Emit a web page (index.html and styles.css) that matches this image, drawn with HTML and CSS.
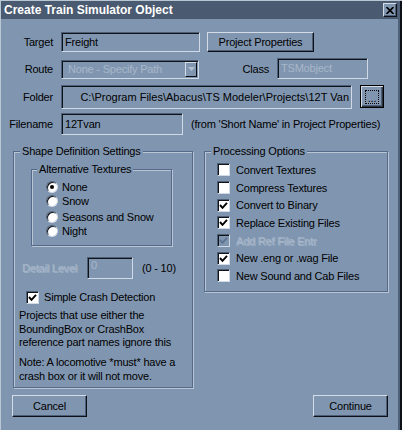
FILE: index.html
```html
<!DOCTYPE html>
<html lang="en">
<head>
  <meta charset="UTF-8">
  <meta name="viewport" content="width=device-width, initial-scale=1.0">
  <title>Create Train Simulator Object</title>
  <link rel="stylesheet" href="styles.css">
</head>
<body>
  <div class="window">
    <div class="titlebar">
      <span class="title">Create Train Simulator Object</span>
      <span class="close">
        <svg width="8" height="7" viewBox="0 0 8 7"><path d="M0.5 0 L7.5 7 M7.5 0 L0.5 7" stroke="#000" stroke-width="1.7"/></svg>
      </span>
    </div>

    <div class="row row-target">
      <span class="lbl">Target</span>
      <div class="field field-target">Freight</div>
      <span class="btn btn-props">Project Properties</span>
    </div>

    <div class="row row-route">
      <span class="lbl">Route</span>
      <div class="field select">
        <span class="select-text dim">None - Specify Path</span>
        <span class="arrow">
          <svg width="7" height="4" viewBox="0 0 7 4"><path d="M0 0 H7 L3.5 4 Z" fill="#b4c1d0"/></svg>
        </span>
      </div>
      <span class="lbl lbl-class">Class</span>
      <div class="field field-class dim">TSMobject</div>
    </div>

    <div class="row row-folder">
      <span class="lbl">Folder</span>
      <div class="field field-folder">C:\Program Files\Abacus\TS Modeler\Projects\12T Van</div>
      <span class="btn btn-browse"><span class="focus">...</span></span>
    </div>

    <div class="row row-file">
      <span class="lbl">Filename</span>
      <div class="field field-file">12Tvan</div>
      <span class="hint">(from 'Short Name' in Project Properties)</span>
    </div>

    <div class="groups">
      <div class="group group-shape">
        <span class="group-title">Shape Definition Settings</span>

        <div class="group subgroup">
          <span class="group-title">Alternative Textures</span>
          <div class="radio-row first"><span class="radio on"></span>None</div>
          <div class="radio-row"><span class="radio"></span>Snow</div>
          <div class="radio-row sep"><span class="radio"></span>Seasons and Snow</div>
          <div class="radio-row"><span class="radio"></span>Night</div>
        </div>

        <div class="detail-row">
          <span class="detail-lbl dim">Detail Level</span>
          <div class="field field-detail dim">0</div>
          <span class="range">(0 - 10)</span>
        </div>

        <div class="crash-row">
          <span class="cb"><svg width="9" height="9" viewBox="0 0 9 9"><path d="M1 4 L3.5 6.8 L8 1.8" fill="none" stroke="#000" stroke-width="1.9"/></svg></span>
          Simple Crash Detection
        </div>

        <div class="note">
          <p>Projects that use either the<br>BoundingBox or CrashBox<br>reference part names ignore this</p>
          <p class="note-loco">Note: A locomotive *must* have a<br>crash box or it will not move.</p>
        </div>
      </div>

      <div class="group group-proc">
        <span class="group-title">Processing Options</span>
        <div class="proc-list">
          <div class="check-row"><span class="cb"></span>Convert Textures</div>
          <div class="check-row"><span class="cb"></span>Compress Textures</div>
          <div class="check-row"><span class="cb"><svg width="9" height="9" viewBox="0 0 9 9"><path d="M1 4 L3.5 6.8 L8 1.8" fill="none" stroke="#000" stroke-width="1.9"/></svg></span>Convert to Binary</div>
          <div class="check-row"><span class="cb"><svg width="9" height="9" viewBox="0 0 9 9"><path d="M1 4 L3.5 6.8 L8 1.8" fill="none" stroke="#000" stroke-width="1.9"/></svg></span>Replace Existing Files</div>
          <div class="check-row dim"><span class="cb cb-off"><svg width="9" height="9" viewBox="0 0 9 9"><path d="M1 4 L3.5 6.8 L8 1.8" fill="none" stroke="#5f7390" stroke-width="1.9"/></svg></span>Add Ref File Entr</div>
          <div class="check-row"><span class="cb"><svg width="9" height="9" viewBox="0 0 9 9"><path d="M1 4 L3.5 6.8 L8 1.8" fill="none" stroke="#000" stroke-width="1.9"/></svg></span>New .eng or .wag File</div>
          <div class="check-row"><span class="cb"></span>New Sound and Cab Files</div>
        </div>
      </div>
    </div>

    <div class="footer">
      <span class="btn btn-foot">Cancel</span>
      <span class="btn btn-foot">Continue</span>
    </div>
  </div>
</body>
</html>
```

FILE: styles.css
```css
* {
  box-sizing: border-box;
}
body {
  margin: 0;
  background-color: #8096b0;
  font-family: "Liberation Sans", Arial, sans-serif;
  font-size: 11px;
  letter-spacing: -0.2px;
  color: #000;
}
.window {
  width: 402px;
  height: 430px;
  overflow: hidden;
  padding-top: 1px;
  background-color: #8096b0;
  box-shadow: inset 1px 1px 0 #b9c6d4, inset -2px 0 0 #0d1117, inset -4px 0 0 #4f6079;
}
.titlebar {
  height: 18px;
  margin: 0 4px 0 1px;
  padding: 0 1px 0 3px;
  background-color: #4a5a70;
  display: flex;
  align-items: center;
  justify-content: space-between;
}
.title {
  color: #fff;
  font-weight: bold;
  font-size: 12px;
  letter-spacing: 0;
}
.close {
  width: 14px;
  height: 14px;
  background-color: #8096b0;
  border: 1px solid;
  border-color: #d3dce7 #0d1117 #0d1117 #d3dce7;
  box-shadow: inset -1px -1px 0 #4d5e75;
  display: flex;
  align-items: center;
  justify-content: center;
}

/* top form rows */
.row {
  display: flex;
  align-items: center;
}
.lbl {
  width: 53px;
  margin-right: 8px;
  text-align: right;
  white-space: nowrap;
}
.field {
  height: 20px;
  padding: 0 3px;
  border: 1px solid;
  border-color: #4d5e75 #d0dae6 #d0dae6 #4d5e75;
  box-shadow: inset 1px 1px 0 #0f141b;
  display: flex;
  align-items: center;
  white-space: nowrap;
  overflow: hidden;
}
.dim {
  color: #a8b7c9;
}
.btn {
  border: 1px solid;
  border-color: #d3dce7 #0d1117 #0d1117 #d3dce7;
  box-shadow: inset -1px -1px 0 #4d5e75;
  display: flex;
  align-items: center;
  justify-content: center;
  white-space: nowrap;
}
.row-target {
  margin-top: 13px;
  height: 20px;
}
.field-target {
  width: 139px;
}
.btn-props {
  width: 107px;
  height: 20px;
  margin-left: 7px;
}
.row-route {
  margin-top: 6px;
  height: 22px;
}
.select {
  width: 138px;
  height: 19px;
  padding: 0 1px 0 6px;
}
.select-text {
  flex: 1;
}
.arrow {
  width: 12px;
  height: 15px;
  border: 1px solid;
  border-color: #d3dce7 #0d1117 #0d1117 #d3dce7;
  display: flex;
  align-items: center;
  justify-content: center;
}
.lbl-class {
  width: 70px;
}
.field-class {
  width: 91px;
  height: 21px;
  margin-top: -2px;
}
.row-folder {
  margin-top: 5px;
  height: 24px;
}
.field-folder {
  width: 291px;
  height: 24px;
  justify-content: flex-end;
  padding-right: 2px;
  letter-spacing: 0;
}
.btn-browse {
  width: 24px;
  height: 23px;
  margin-left: 8px;
  margin-top: -1px;
  border-color: #000;
  box-shadow: inset 1px 1px 0 #d3dce7, inset -1px -1px 0 #2a3442, inset -2px -2px 0 #4d5e75;
}
.focus {
  width: 14px;
  height: 14px;
  border: 1px dotted #000;
  display: flex;
  align-items: flex-end;
  justify-content: center;
  line-height: 9px;
}
.row-file {
  margin-top: 4px;
  height: 22px;
}
.field-file {
  width: 122px;
  height: 22px;
}
.hint {
  margin-left: 8px;
  white-space: nowrap;
}

/* group boxes */
.groups {
  display: flex;
  align-items: flex-start;
  gap: 11px;
  padding-left: 13px;
  margin-top: 16px;
}
.group {
  border: 1px solid #56698a;
  box-shadow: inset 1px 1px 0 #b8c5d4, 1px 1px 0 #b8c5d4;
}
.group-title {
  display: block;
  width: max-content;
  line-height: 14px;
  margin: -8px 0 0 6px;
  padding: 0 2px;
  background-color: #8096b0;
}
.group-shape {
  width: 180px;
  height: 237px;
}
.group-proc {
  width: 184px;
  height: 141px;
}
.subgroup {
  width: 141px;
  height: 77px;
  margin: 11px 0 0 17px;
}
.subgroup .group-title {
  margin-left: 5px;
}
.radio-row {
  display: flex;
  align-items: center;
  height: 14px;
  padding-left: 14px;
}
.radio-row.first {
  margin-top: 4px;
}
.radio-row.sep {
  margin-top: 2px;
}
.radio {
  width: 12px;
  height: 12px;
  margin-right: 4px;
  border-radius: 50%;
  background-color: #fff;
  border: 1px solid;
  border-color: #4d5e75 #d0dae6 #d0dae6 #4d5e75;
  box-shadow: inset 1px 1px 0 #0f141b;
  display: flex;
  align-items: center;
  justify-content: center;
}
.radio.on:after {
  content: "";
  width: 4px;
  height: 4px;
  border-radius: 50%;
  background-color: #000;
}
.detail-row {
  display: flex;
  align-items: center;
  height: 22px;
  margin-top: 11px;
  padding-left: 8px;
}
.detail-lbl {
  width: 57px;
  white-space: nowrap;
  text-shadow: 1px 1px 0 #9fb1c6;
}
.field-detail {
  width: 46px;
  height: 22px;
  margin-left: 8px;
  align-items: flex-start;
  padding-top: 1px;
}
.range {
  margin-left: 9px;
}
.crash-row {
  display: flex;
  align-items: center;
  height: 14px;
  margin-top: 11px;
  padding-left: 12px;
}
.crash-row .cb {
  margin-right: 5px;
}
.cb {
  flex: none;
  width: 13px;
  height: 13px;
  background-color: #fff;
  border: 1px solid;
  border-color: #4d5e75 #d0dae6 #d0dae6 #4d5e75;
  box-shadow: inset 1px 1px 0 #0f141b;
  display: flex;
  align-items: center;
  justify-content: center;
}
.cb-off {
  background-color: #8096b0;
}
.note {
  padding-left: 5px;
  margin-top: 5px;
  line-height: 13.5px;
  white-space: nowrap;
}
.note p {
  margin: 0;
}
.note-loco {
  margin-top: 6.5px !important;
}
.proc-list {
  margin-top: 3px;
}
.check-row {
  display: flex;
  align-items: center;
  height: 17.7px;
  padding-left: 12px;
  white-space: nowrap;
}
.check-row .cb {
  margin-right: 6px;
}
.check-row.dim {
  text-shadow: 1px 1px 0 #9fb1c6;
}

/* bottom buttons */
.footer {
  display: flex;
  justify-content: space-between;
  margin-top: 7px;
  padding: 0 14px 0 12px;
}
.btn-foot {
  width: 75px;
  height: 22px;
}
```
